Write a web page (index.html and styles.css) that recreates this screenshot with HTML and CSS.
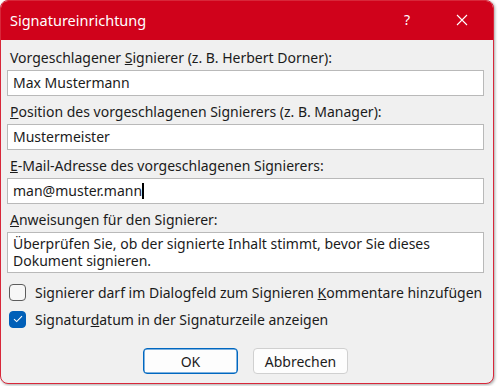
FILE: index.html
```html
<!DOCTYPE html>
<html lang="de">
<head>
<meta charset="utf-8">
<title>Signatureinrichtung</title>
<link rel="stylesheet" href="styles.css">
</head>
<body>
<div class="window">
  <div class="titlebar">
    <span class="title">Signatureinrichtung</span>
    <span class="tb-help">?</span>
    <span class="tb-close">
      <svg width="12" height="12" viewBox="0 0 12 12"><path d="M1 1 L11 11 M11 1 L1 11" stroke="#fff" stroke-width="1.1" fill="none"/></svg>
    </span>
  </div>
  <div class="content">
    <div class="field">
      <div class="label">Vorgeschlagener <u>S</u>ignierer (z. B. Herbert Dorner):</div>
      <div class="input">Max Mustermann</div>
    </div>
    <div class="field">
      <div class="label"><u>P</u>osition des vorgeschlagenen Signierers (z. B. Manager):</div>
      <div class="input">Mustermeister</div>
    </div>
    <div class="field">
      <div class="label"><u>E</u>-Mail-Adresse des vorgeschlagenen Signierers:</div>
      <div class="input">man@muster.mann<span class="caret"></span></div>
    </div>
    <div class="field">
      <div class="label"><u>A</u>nweisungen für den Signierer:</div>
      <div class="input textarea">Überprüfen Sie, ob der signierte Inhalt stimmt, bevor Sie dieses Dokument signieren.</div>
    </div>
    <div class="checks">
      <div class="check">
        <span class="box"></span>
        <span class="ctext">Signierer darf im Dialogfeld zum Signieren <u>K</u>ommentare hinzufügen</span>
      </div>
      <div class="check">
        <span class="box checked"><svg width="10" height="8" viewBox="0 0 10 8"><path d="M1 4.2 L3.7 6.6 L9 1.2" stroke="#fff" stroke-width="1.1" fill="none"/></svg></span>
        <span class="ctext">Signatur<u>d</u>atum in der Signaturzeile anzeigen</span>
      </div>
    </div>
    <div class="buttons">
      <button class="btn primary">OK</button>
      <button class="btn">Abbrechen</button>
    </div>
  </div>
</div>
</body>
</html>
```

FILE: styles.css
```css
* { box-sizing: border-box; }
html, body {
  margin: 0;
  padding: 0;
  background: #ffffff;
  width: 499px;
  height: 386px;
  overflow: hidden;
}
body {
  font-family: "Noto Sans", "Open Sans", sans-serif;
  font-size: 14px;
  color: #1b1b1b;
}
.window {
  width: 494px;
  height: 384px;
  border: 1px solid #d8273a;
  border-radius: 8px;
  background: #f0f0f0;
  box-shadow: 1px 1px 3px rgba(0,0,0,0.35);
  overflow: hidden;
  display: flex;
  flex-direction: column;
}
.titlebar {
  height: 39px;
  background: #d0021b;
  color: #fff;
  display: flex;
  align-items: center;
  flex-shrink: 0;
}
.title {
  font-size: 14.5px;
  margin-left: 9px;
  flex: 1;
  padding-bottom: 2px;
}
.tb-help {
  font-size: 14px;
  width: 20px;
  text-align: center;
  margin-right: 39px;
  padding-bottom: 2px;
}
.tb-close {
  width: 12px;
  height: 12px;
  margin-right: 25px;
  display: flex;
  margin-bottom: 2px;
}
.content {
  padding: 10px 9px 0 6px;
  display: flex;
  flex-direction: column;
}
.field {
  display: flex;
  flex-direction: column;
  margin-bottom: 8px;
}
.label {
  height: 16px;
  line-height: 16px;
  padding-left: 3px;
  margin-bottom: 4px;
  white-space: nowrap;
}
.input {
  height: 26px;
  background: #fff;
  border: 1px solid #b9b9b9;
  padding: 0 5px;
  line-height: 24px;
  white-space: nowrap;
  display: flex;
  align-items: center;
}
.textarea {
  height: 41px;
  white-space: normal;
  display: block;
  line-height: 17px;
  padding-top: 2px;
}
.caret {
  display: inline-block;
  width: 2px;
  height: 16px;
  background: #000;
  margin-left: 0;
}
.checks {
  display: flex;
  flex-direction: column;
  gap: 9px;
  margin-top: 2px;
}
.check {
  display: flex;
  align-items: center;
  height: 18px;
}
.box {
  width: 17px;
  height: 17px;
  border: 1px solid #5c5c5c;
  border-radius: 4px;
  background: #f7f7f7;
  margin-left: 2px;
  margin-right: 9px;
  display: flex;
  align-items: center;
  justify-content: center;
}
.box.checked {
  background: #005fb8;
  border-color: #005fb8;
}
.ctext {
  white-space: nowrap;
}
.buttons {
  display: flex;
  justify-content: center;
  gap: 15px;
  margin-top: 20px;
  padding-left: 0;
}
.btn {
  font-family: inherit;
  font-size: 14px;
  color: #1b1b1b;
  width: 95px;
  height: 26px;
  background: #fdfdfd;
  border: 1px solid #d0d0d0;
  border-radius: 4px;
  padding: 0;
}
.btn.primary {
  border: 1px solid #0067c0;
  box-shadow: inset 0 0 0 0.5px #0067c0;
}
```
